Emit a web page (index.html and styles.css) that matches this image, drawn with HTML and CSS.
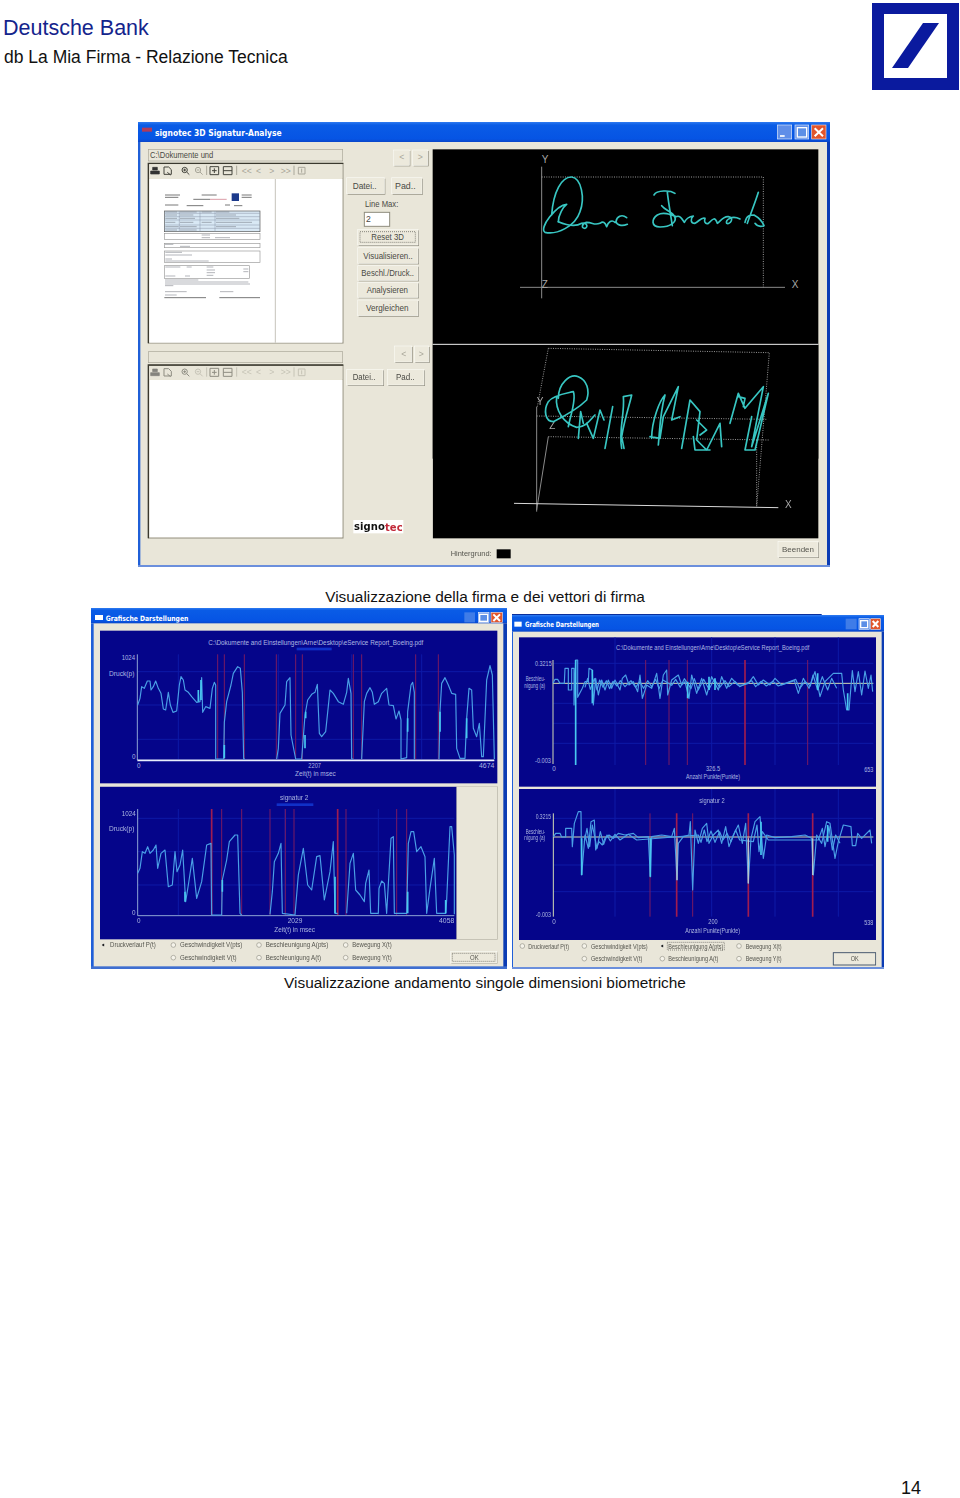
FILE: index.html
```html
<!DOCTYPE html>
<html lang="it">
<head>
<meta charset="utf-8">
<title>Deutsche Bank - db La Mia Firma</title>
<link rel="stylesheet" href="styles.css">
</head>
<body>
<main class="page">
<header class="header">
  <div class="heading">
    <div class="brand">Deutsche Bank</div>
    <div class="subtitle">db La Mia Firma - Relazione Tecnica</div>
  </div>
  <svg class="logo" viewBox="0 0 87 87" aria-label="Deutsche Bank logo">
    <path class="logo-mark" fill-rule="evenodd" d="M0 0H87V87H0ZM12 11V75H75V11Z"/>
    <path class="logo-mark" d="M51 20H67L36 65H20Z"/>
  </svg>
</header>

<svg class="shot shot-main" viewBox="24 21 2076 1335">
  <defs>
    <linearGradient id="tbar" x1="0" y1="0" x2="0" y2="1">
      <stop offset="0" stop-color="#2f7bf0"/><stop offset=".15" stop-color="#0a5ce6"/><stop offset=".85" stop-color="#0654e4"/><stop offset="1" stop-color="#0a46c8"/>
    </linearGradient>
    <g id="toolbar">
      <path class="ic-d" d="M62 168h26v9H62zM68 157h14v8H68z"/>
      <path class="ic-o" d="M102 156h14l8 8v14h-22zM112 172l10 8"/>
      <circle class="ic-o" cx="164" cy="165" r="8"/><path class="ic-o" d="M170 171l8 8M160 165h8M164 161v8"/>
      <circle class="ic-f" cx="204" cy="165" r="8"/><path class="ic-f" d="M210 171l8 8M200 165h8"/>
      <path class="ic-f" d="M230 152v28M320 152v28M492 152v28"/>
      <path class="ic-o" d="M240 155h26v24h-26zM246 167h14M253 160v14"/>
      <path class="ic-o" d="M280 155h26v24h-26zM280 167h26"/>
      <text class="t tool-t" x="335" y="167">&lt;&lt;</text>
      <text class="t tool-t" x="378" y="167">&lt;</text>
      <text class="t tool-t" x="418" y="167">&gt;</text>
      <text class="t tool-t" x="452" y="167">&gt;&gt;</text>
      <path class="ic-f" d="M505 157h20v20h-20zM515 161v12"/>
    </g>
  </defs>
  <rect class="win" x="24" y="21" width="2076" height="1335"/>
  <rect x="24" y="21" width="2076" height="60" fill="url(#tbar)"/>
  <rect class="bd-l" x="24" y="81" width="7" height="1275"/>
  <rect class="bd-r" x="2091" y="81" width="9" height="1275"/>
  <rect class="bd-b-soft" x="24" y="1350" width="2076" height="6"/>

  <g>
    <rect class="ico-red" x="36" y="38" width="30" height="12"/>
    <text class="t tt" x="75" y="53" textLength="380" lengthAdjust="spacingAndGlyphs">signotec 3D Signatur-Analyse</text>
    <rect class="field" x="55" y="103" width="583" height="35"/>
    <text class="t ui" x="60" y="121" textLength="190" lengthAdjust="spacingAndGlyphs">C:\Dokumente und</text>
    <rect class="frame" x="56" y="146" width="583" height="538"/>
    <path class="frame-top" d="M55 685V145H640"/>
    <rect class="tool" x="58" y="148" width="579" height="42"/>
    <use href="#toolbar"/>
    <rect class="sheet" x="58" y="192" width="579" height="491"/>
    <path class="rule" d="M436 192V683"/>

    <path class="doc-l" d="M105 240h45M105 247h40M215 240h45M190 253h50M105 270h40M170 272h50M285 270h15M312 272h25"/>
    <rect class="doc-logo" x="305" y="235" width="22" height="23"/>
    <path class="doc-l" d="M335 240h30M335 247h30"/>
    <path class="doc-red" d="M240 253h50"/>
    <rect class="doc-tb" x="103" y="288" width="287" height="62"/>
    <path class="doc-g" d="M103 295h287M103 305h287M103 315h287M103 330h287M103 340h287M148 288v62M210 288v62M255 288v62"/>
    <path class="doc-h" d="M106 291h35M150 291h50M215 291h30M258 291h40M106 300h35M150 300h40M258 300h60M106 310h35M150 310h45M258 310h70M106 322h30M150 322h40M215 322h30M258 322h108M106 335h40M150 335h50M258 335h60M106 345h35M150 345h50"/>
    <rect class="doc-box" x="103" y="355" width="287" height="18"/>
    <path class="doc-h" d="M215 360h25M215 368h25M255 368h45"/>
    <rect class="doc-box" x="103" y="385" width="287" height="13"/>
    <path class="doc-h" d="M105 388h25M150 394h30"/>
    <rect class="doc-box" x="103" y="408" width="287" height="34"/>
    <path class="doc-h" d="M106 412h50M106 420h80M106 432h20M106 438h130"/>
    <rect class="doc-box" x="103" y="452" width="255" height="38"/>
    <path class="doc-h" d="M106 456h45M170 456h15M230 456h20M230 465h25M230 473h25M230 481h20M340 462h15M340 470h15M106 483h30M165 483h15"/>
    <path class="doc-h" d="M105 495h100M105 501h250M105 507h255M105 512h25M105 530h65M270 530h40M105 540h35"/>
    <path class="doc-l" d="M103 548h125M268 548h122"/>

    <rect class="bs" x="793" y="108" width="48" height="46"/><rect class="bf" x="790" y="105" width="48" height="46"/>
    <rect class="bs" x="851" y="108" width="45" height="46"/><rect class="bf" x="848" y="105" width="45" height="46"/>
    <text class="t tool-t" x="808" y="127">&lt;</text><text class="t tool-t" x="863" y="127">&gt;</text>

    <rect class="bs" x="653" y="191" width="113" height="48"/><rect class="bf" x="650" y="188" width="113" height="48"/>
    <text class="t ui" x="668" y="213" textLength="72" lengthAdjust="spacingAndGlyphs">Datei..</text>
    <rect class="bs" x="788" y="191" width="91" height="48"/><rect class="bf" x="785" y="188" width="91" height="48"/>
    <text class="t ui" x="795" y="213" textLength="62" lengthAdjust="spacingAndGlyphs">Pad..</text>
    <text class="t ui" x="705" y="268" textLength="100" lengthAdjust="spacingAndGlyphs">Line Max:</text>
    <rect class="input" x="703" y="292" width="76" height="42"/>
    <text class="t ui" x="708" y="312">2</text>

    <rect class="bs" x="686" y="346" width="181" height="47"/><rect class="bf" x="683" y="343" width="181" height="47"/>
    <rect class="focus" x="690" y="350" width="166" height="32"/>
    <text class="t ui" x="724" y="366" textLength="98" lengthAdjust="spacingAndGlyphs">Reset 3D</text>
    <rect class="bs" x="686" y="401" width="181" height="47"/><rect class="bf" x="683" y="398" width="181" height="47"/>
    <text class="t ui" x="700" y="423" textLength="148" lengthAdjust="spacingAndGlyphs">Visualisieren..</text>
    <rect class="bs" x="686" y="455" width="181" height="44"/><rect class="bf" x="683" y="452" width="181" height="44"/>
    <text class="t ui" x="694" y="475" textLength="158" lengthAdjust="spacingAndGlyphs">Beschl./Druck..</text>
    <rect class="bs" x="686" y="505" width="181" height="45"/><rect class="bf" x="683" y="502" width="181" height="45"/>
    <text class="t ui" x="710" y="526" textLength="124" lengthAdjust="spacingAndGlyphs">Analysieren</text>
    <rect class="bs" x="686" y="558" width="181" height="47"/><rect class="bf" x="683" y="555" width="181" height="47"/>
    <text class="t ui" x="708" y="579" textLength="128" lengthAdjust="spacingAndGlyphs">Vergleichen</text>
  </g>

  <g transform="translate(0 675)">
    <rect class="field" x="55" y="35" width="583" height="33"/>
    <rect class="frame" x="56" y="76" width="583" height="518"/>
    <path class="frame-top" d="M55 595V75H640"/>
    <rect class="tool" x="58" y="78" width="579" height="40"/>
    <g class="faded"><use href="#toolbar" y="-70"/></g>
    <rect class="sheet" x="58" y="120" width="579" height="472"/>
    <rect class="bs" x="796" y="21" width="52" height="48"/><rect class="bf" x="793" y="18" width="52" height="48"/>
    <rect class="bs" x="856" y="21" width="43" height="48"/><rect class="bf" x="853" y="18" width="43" height="48"/>
    <text class="t tool-t" x="814" y="41">&lt;</text><text class="t tool-t" x="866" y="41">&gt;</text>
    <rect class="bs" x="653" y="91" width="109" height="47"/><rect class="bf" x="650" y="88" width="109" height="47"/>
    <text class="t ui" x="668" y="112" textLength="68" lengthAdjust="spacingAndGlyphs">Datei..</text>
    <rect class="bs" x="775" y="91" width="110" height="47"/><rect class="bf" x="772" y="88" width="110" height="47"/>
    <text class="t ui" x="798" y="112" textLength="56" lengthAdjust="spacingAndGlyphs">Pad..</text>
    <rect class="sheet" x="670" y="540" width="150" height="40"/>
    <text class="t sig-logo" x="672" y="560" textLength="146">signo<tspan class="sig-red">tec</tspan></text>
  </g>

  <g transform="translate(900 0)">
    <rect class="btn-min" x="1042" y="30" width="43" height="42"/>
    <path class="glyph" d="M1050 63h14"/>
    <rect class="btn-min" x="1095" y="30" width="41" height="42"/>
    <rect class="glyph-box" x="1102" y="38" width="28" height="28"/>
    <rect class="btn-close" x="1145" y="30" width="43" height="42"/>
    <path class="glyph-x" d="M1154 40l25 24M1179 40l-25 24"/>
    <rect class="black" x="8" y="103" width="1157" height="928"/>
    <path class="white-line" d="M8 688H1165"/>
    <path class="ax1" d="M335 155V550M270 517H1065"/>
    <path class="dots" d="M335 186H1000V517"/>
    <text class="t ax-t" x="335" y="132">Y</text><text class="t ax-t" x="1085" y="508">X</text><text class="t ax-t" x="335" y="508">Z</text>
    <g class="sig">
      <path d="M365 300C370 230 395 185 425 186C455 190 465 250 450 290C435 335 380 360 345 352C325 340 380 270 410 268C400 275 385 300 385 320"/>
      <path d="M385 320C420 335 440 334 455 325C470 322 476 335 465 340C452 340 456 325 470 322C490 322 490 332 510 325C520 318 525 322 530 335C535 320 545 313 555 322M590 308C575 296 560 305 558 320C560 330 575 335 592 328"/>
      <path d="M672 240C680 225 720 225 735 235M712 232C715 260 722 300 727 332"/>
      <path d="M695 272C705 285 725 290 732 302C745 320 720 336 690 336C662 335 665 312 682 300C700 290 720 298 738 305C750 300 755 310 763 322C768 312 775 305 790 303C780 312 782 325 795 325C808 318 815 305 825 310C822 320 825 328 835 325C850 310 855 305 862 325C870 320 880 303 895 305C915 308 900 330 890 325C885 315 905 300 930 312"/>
      <path d="M985 232C975 265 960 300 952 325M945 322C950 300 960 300 972 300C990 310 998 322 1002 332C990 336 980 332 975 325"/>
    </g>
  </g>

  <g transform="translate(900 675)">
    <rect class="black" x="8" y="15" width="1157" height="580"/>
    <path class="dots" d="M355 25L1018 38L980 500M355 25L322 200M320 228L1010 238M355 290L1018 300M980 300V500"/>
    <path class="ax1" d="M355 290L320 510M320 200V515"/>
    <path class="ax2" d="M252 490L1045 503"/>
    <text class="t ax-t" x="320" y="183">Y</text><text class="t ax-t" x="358" y="255">Z</text><text class="t ax-t" x="1065" y="493">X</text>
    <g class="sig">
      <path d="M385 175C385 130 420 100 445 110C470 120 480 150 470 180C440 210 400 230 370 245C345 245 340 210 355 185C370 165 410 160 430 155C440 180 420 230 415 260M380 170C375 210 400 250 440 262C470 260 480 240 495 225"/>
      <path d="M445 295L452 215L460 250M470 250L490 295L510 210L522 240M525 325L548 200M575 325C565 270 585 220 580 170L605 165C600 190 585 230 575 290L582 325"/>
      <path d="M665 295C665 240 690 180 705 165C690 220 690 260 685 315M660 290L690 295L700 230L745 140L725 240L750 230M755 325L780 180L810 215L800 300L830 330L870 250L875 320M790 290L795 330L840 330M800 240L830 270L810 285"/>
      <path d="M900 250L925 160L945 205L1000 140L965 320L1015 160L975 330L945 330L965 230M925 170L945 175L940 200"/>
    </g>
    <text class="t ui-s" x="62" y="640" textLength="123" lengthAdjust="spacingAndGlyphs">Hintergrund:</text>
    <rect class="black" x="200" y="628" width="42" height="27"/>
    <rect class="bs" x="1047" y="607" width="120" height="47"/><rect class="bf" x="1044" y="604" width="120" height="47"/>
    <text class="t ui-s" x="1056" y="628" textLength="96" lengthAdjust="spacingAndGlyphs">Beenden</text>
  </g>
</svg>

<p class="caption">Visualizzazione della firma e dei vettori di firma</p>

<div class="shot-row">
  <svg class="shot shot-left" viewBox="18 9 1248 1083">
    <rect class="win" x="18" y="9" width="1248" height="1083"/>
    <rect x="18" y="9" width="1248" height="46" fill="url(#tbar)"/>
    <rect class="bd-l" x="18" y="55" width="8" height="1037"/>
    <rect class="bd-r" x="1255" y="55" width="11" height="1037"/>
    <rect class="bd-b" x="18" y="1084" width="1248" height="8"/>
    <rect class="sheet" x="30" y="30" width="24" height="15"/>
    <text class="t tt-s" x="62" y="40" textLength="248" lengthAdjust="spacingAndGlyphs">Grafische Darstellungen</text>
    <rect class="btn-dim" x="1138" y="22" width="32" height="30"/>
    <rect class="btn-min" x="1180" y="22" width="32" height="30"/>
    <rect class="glyph-box" x="1184" y="28" width="24" height="21"/>
    <rect class="btn-close" x="1218" y="22" width="34" height="30"/>
    <path class="glyph-x" d="M1225 28l20 20M1245 28l-20 20"/>

    <rect class="plot" x="45" y="77" width="1192" height="458"/>
    <path class="grid" d="M157 200H1228M157 300H1228M157 403H1228M280 148V462M580 148V462M800 148V462M1010 148V462"/>
    <path class="red" d="M398 148V462M418 148V462M478 148V462M574 148V462M632 148V462M652 148V462M805 148V462M830 148V462M992 148V462M1060 148V462"/>
    <path class="ax-b" d="M157 148V465"/>
    <path class="ax-w" d="M157 466H1228"/>
    <polyline class="line" points="158,300 165,280 170,245 178,250 187,228 195,228 198,255 205,245 212,228 220,250 228,265 235,312 242,315 250,262 256,300 264,322 275,318 283,240 288,215 295,225 300,255 310,262 320,275 335,292 345,290 350,218 353,322 362,305 375,310 382,250 388,232 392,240 392,462 416,462 418,352 425,290 438,240 445,205 458,185 466,190 472,262 476,462 480,462"/>
    <polyline class="line" points="575,462 580,430 585,325 600,300 605,230 615,218 618,390 632,462 650,462 660,330 668,285 680,268 690,262 697,238 703,385 710,395 722,380 735,255 745,265 760,290 775,298 785,262 790,220 798,265 800,462 805,462"/>
    <polyline class="line" points="830,462 838,290 845,265 855,248 862,262 868,298 880,290 890,265 905,250 912,300 925,302 933,342 942,318 948,345 948,462 965,458 968,320 978,240 983,232 988,262 988,462"/>
    <polyline class="line" points="1062,462 1065,320 1070,235 1080,218 1090,240 1100,265 1112,268 1115,430 1125,460 1140,460 1145,340 1152,250 1160,255 1165,370 1175,395 1183,355 1190,455 1195,455 1205,225 1215,182 1222,210 1228,462"/>
    <path class="line-hi" d="M340 290V255M348 285V225M418 460V420M662 340V320M660 430V390M1065 380V320M1145 400V340M968 380V340"/>
    <text class="t pl" x="370" y="113" textLength="645" lengthAdjust="spacingAndGlyphs">C:\Dokumente and Einstellungen\Arne\Desktop\eService Report_Boeing.pdf</text>
    <rect class="blurb" x="635" y="128" width="105" height="8"/>
    <text class="t pl" x="110" y="158" textLength="40" lengthAdjust="spacingAndGlyphs">1024</text>
    <text class="t pl" x="72" y="204" textLength="76" lengthAdjust="spacingAndGlyphs">Druck(p)</text>
    <text class="t pl" x="141" y="455">0</text>
    <text class="t pl" x="156" y="481">0</text>
    <text class="t pl" x="670" y="481" textLength="38" lengthAdjust="spacingAndGlyphs">2207</text>
    <text class="t pl" x="1182" y="481" textLength="46" lengthAdjust="spacingAndGlyphs">4674</text>
    <text class="t pl" x="630" y="505" textLength="122" lengthAdjust="spacingAndGlyphs">Zeit(t) in msec</text>

    <g transform="translate(0 540)">
      <rect class="panel" x="1115" y="5" width="122" height="458"/>
      <rect class="plot" x="45" y="5" width="1069" height="458"/>
      <path class="grid" d="M158 100H1108M158 200H1108M158 300H1108M280 72V390M600 72V390M880 72V390"/>
      <path class="red" d="M410 72V390M470 72V390M555 72V390M601 72V390M627 72V390M783 72V390M935 72V390M965 72V390"/>
      <path class="red-b" d="M380 72V390M758 72V390"/>
      <path class="ax-b" d="M158 72V392H1108"/>
      <polyline class="line" points="158,265 165,250 172,200 180,205 188,185 195,205 205,195 213,180 218,250 228,205 240,195 250,305 262,300 270,200 276,260 285,240 293,195 302,350 310,300 322,220 335,340 350,290 365,180 378,175 380,390 410,390 412,285 425,225 433,170 450,150 458,150 465,385 470,390"/>
      <polyline class="line" points="555,388 562,320 568,230 580,205 588,175 592,385 630,390 640,270 655,190 668,300 680,315 695,215 705,212 718,345 735,260 745,170 750,385 758,385"/>
      <polyline class="line" points="785,385 795,235 805,205 812,315 825,330 838,350 842,295 852,255 857,385 880,385 882,310 890,288 898,295 905,385 918,160 925,155 928,385 965,385 970,175 978,140 986,140 995,200 1008,185 1020,215 1025,385 1035,310 1048,220 1055,385 1082,385 1085,345 1095,125 1100,125 1108,210 1108,388"/>
      <path class="line-hi" d="M750 385V275M968 385V320M1082 385V345M412 320V285M300 350V320"/>
      <text class="t pl" x="585" y="38" textLength="85" lengthAdjust="spacingAndGlyphs">signatur 2</text>
      <rect class="blurb" x="575" y="55" width="110" height="8"/>
      <text class="t pl" x="110" y="85" textLength="42" lengthAdjust="spacingAndGlyphs">1024</text>
      <text class="t pl" x="72" y="130" textLength="76" lengthAdjust="spacingAndGlyphs">Druck(p)</text>
      <text class="t pl" x="141" y="382">0</text>
      <text class="t pl" x="156" y="408">0</text>
      <text class="t pl" x="608" y="408" textLength="44" lengthAdjust="spacingAndGlyphs">2029</text>
      <text class="t pl" x="1062" y="408" textLength="46" lengthAdjust="spacingAndGlyphs">4058</text>
      <text class="t pl" x="568" y="433" textLength="122" lengthAdjust="spacingAndGlyphs">Zeit(t) in msec</text>

      <circle class="radio on" cx="55" cy="480" r="5"/>
      <text class="t ui-s" x="75" y="480" textLength="137" lengthAdjust="spacingAndGlyphs">Druckverlauf P(t)</text>
      <circle class="radio" cx="265" cy="480" r="7"/>
      <text class="t ui-s" x="285" y="480" textLength="187" lengthAdjust="spacingAndGlyphs">Geschwindigkeit V(pts)</text>
      <circle class="radio" cx="522" cy="480" r="7"/>
      <text class="t ui-s" x="542" y="480" textLength="188" lengthAdjust="spacingAndGlyphs">Beschleunigung A(pts)</text>
      <circle class="radio" cx="782" cy="480" r="7"/>
      <text class="t ui-s" x="802" y="480" textLength="118" lengthAdjust="spacingAndGlyphs">Bewegung X(t)</text>
      <circle class="radio" cx="265" cy="518" r="7"/>
      <text class="t ui-s" x="285" y="518" textLength="170" lengthAdjust="spacingAndGlyphs">Geschwindigkeit V(t)</text>
      <circle class="radio" cx="522" cy="518" r="7"/>
      <text class="t ui-s" x="542" y="518" textLength="166" lengthAdjust="spacingAndGlyphs">Beschleunigung A(t)</text>
      <circle class="radio" cx="782" cy="518" r="7"/>
      <text class="t ui-s" x="802" y="518" textLength="118" lengthAdjust="spacingAndGlyphs">Bewegung Y(t)</text>
      <rect class="bs" x="1099" y="502" width="138" height="34"/><rect class="bf" x="1097" y="500" width="138" height="34"/>
      <rect class="focus" x="1102" y="505" width="128" height="24"/>
      <text class="t ui-s" x="1155" y="517" textLength="26" lengthAdjust="spacingAndGlyphs">OK</text>
    </g>
  </svg>

  <svg class="shot shot-right" viewBox="21 12 1116 1065">
    <rect class="win" x="21" y="12" width="1116" height="1065"/>
    <rect x="21" y="15" width="1116" height="50" fill="url(#tbar)"/>
    <rect class="page-bg" x="950" y="12" width="187" height="3"/>
    <rect class="top-dark" x="21" y="12" width="929" height="3"/>
    <rect class="bd-l" x="21" y="65" width="3" height="1012"/>
    <rect class="bd-r" x="1130" y="65" width="7" height="1012"/>
    <rect class="bd-b-soft" x="21" y="1071" width="1116" height="6"/>
    <rect class="sheet" x="28" y="35" width="22" height="15"/>
    <text class="t tt-s" x="60" y="44" textLength="222" lengthAdjust="spacingAndGlyphs">Grafische Darstellungen</text>
    <rect class="btn-dim" x="1022" y="26" width="33" height="32"/>
    <rect class="btn-min" x="1062" y="26" width="31" height="32"/>
    <rect class="glyph-box" x="1067" y="32" width="21" height="21"/>
    <rect class="btn-close" x="1097" y="26" width="29" height="32"/>
    <path class="glyph-x" d="M1103 33l17 18M1120 33l-17 18"/>

    <rect class="plot" x="42" y="82" width="1071" height="448"/>
    <path class="grid" d="M144 160H1105M144 280H1105M144 340H1105M144 400H1105M330 82V465M620 82V465M810 82V465M1000 82V465"/>
    <path class="red" d="M422 150V465M492 150V465M547 150V465M908 150V465"/>
    <path class="red-b" d="M720 150V465"/>
    <path class="ax-y" d="M144 150V462M144 220H1105"/>
    <polyline class="line" points="144,220 150,208 158,208 165,220 178,220 180,175 190,175 190,240 200,240 200,175 207,175 207,285 212,150 218,150 218,262 232,235 240,215 250,215 252,175 262,180 265,285 272,205 280,255 290,210 300,240 310,210 320,235 330,210 345,240 352,205 362,195 372,225 385,215 398,245 405,195 412,265 425,225 440,235 455,190 465,265 475,195 485,180 488,255 500,210 520,195 530,225 540,215 552,265 560,195 575,250 590,205 605,255 620,200 640,240 650,200 665,235 680,205 698,225 715,225 730,220 745,200 760,225 775,210 795,225 810,205 830,225 850,218 868,212 880,250 895,205 912,235 930,185 945,260 960,215 985,190 1010,190 1015,240 1025,300 1032,300 1042,182 1050,245 1060,185 1070,255 1080,183 1090,235 1098,195 1103,245"/>
    <polyline class="line" points="240,232 248,205 256,238 268,206 276,240 284,210 294,232 304,212 314,236 324,214 336,228 346,212 360,230 378,212 392,232 404,215 416,235 428,212 440,230 452,208 462,236 474,210 500,226 512,208 526,232 538,206 558,236 568,206 580,240 596,208 612,238 628,208 644,232 660,212 672,230 690,214 704,230 740,212 752,230 768,214 784,228 804,214 820,228 872,208 884,236 900,214 916,228 924,195 938,240 952,200 968,240 980,205 995,235"/>
    <path class="line-hi" d="M212 150V465M262 180V280M548 215V265M612 200V240M630 205V240M938 190V240M1028 250V300"/>
    <text class="t pl" x="333" y="113" textLength="580" lengthAdjust="spacingAndGlyphs">C:\Dokumente and Einstellungen\Arne\Desktop\eService Report_Boeing.pdf</text>
    <text class="t pl" x="90" y="160" textLength="50" lengthAdjust="spacingAndGlyphs">0.3215</text>
    <text class="t pl" x="62" y="205" textLength="58" lengthAdjust="spacingAndGlyphs">Beschleu-</text>
    <text class="t pl" x="58" y="225" textLength="62" lengthAdjust="spacingAndGlyphs">nigung (a)</text>
    <text class="t pl" x="90" y="452" textLength="48" lengthAdjust="spacingAndGlyphs">-0.003</text>
    <text class="t pl" x="142" y="476">0</text>
    <text class="t pl" x="603" y="476" textLength="42" lengthAdjust="spacingAndGlyphs">326.5</text>
    <text class="t pl" x="1078" y="478" textLength="27" lengthAdjust="spacingAndGlyphs">653</text>
    <text class="t pl" x="543" y="500" textLength="162" lengthAdjust="spacingAndGlyphs">Anzahl Punkte(Punkte)</text>

    <g transform="translate(0 525)">
      <rect class="plot" x="42" y="12" width="1071" height="453"/>
      <path class="grid" d="M145 100H1105M145 240H1105M145 320H1105M330 12V395M620 12V395M810 12V395M1000 12V395"/>
      <path class="red" d="M435 85V395M563 85V395"/>
      <path class="red-b" d="M515 85V395M730 85V395M923 85V395"/>
      <path class="ax-y" d="M145 85V395M145 156H1105"/>
      <polyline class="line" points="145,156 152,145 165,145 170,156 182,156 182,130 200,130 202,185 208,115 220,80 228,80 230,270 240,150 250,190 258,110 268,105 272,195 282,170 292,180 300,160 312,150 325,160 340,145 360,150 385,145 400,158 430,155 436,275 440,155 470,150 500,155 508,130 516,285 520,175 535,155 552,150 556,110 563,315 570,135 580,175 592,130 605,115 612,175 625,150 640,135 650,175 662,125 672,185 685,150 700,120 712,175 722,115 730,295 738,160 750,110 765,95 775,220 785,150 810,158 860,155 900,150 920,160 925,270 935,150 950,175 965,110 975,115 990,220 1000,170 1015,120 1038,125 1042,182 1052,182 1058,145 1070,160 1095,135 1100,175"/>
      <polyline class="line" points="238,170 246,130 254,185 262,120 276,190 286,140 296,178 306,150 316,168 330,148 345,165 370,148 395,165 580,150 588,172 598,135 606,170 618,138 630,172 644,140 654,165 666,145 678,170 692,135 704,165 745,170 756,120 762,200 772,140 790,165 940,165 952,130 960,185 972,125 982,195 992,150 1005,175"/>
      <path class="ax-g" d="M516 160V285M730 160V295M923 160V270"/>
      <path class="line-hi" d="M436 160V275M230 160V270M768 110V210M968 120V170"/>
      <text class="t pl" x="583" y="47" textLength="76" lengthAdjust="spacingAndGlyphs">signatur 2</text>
      <text class="t pl" x="92" y="93" textLength="46" lengthAdjust="spacingAndGlyphs">0.3215</text>
      <text class="t pl" x="62" y="138" textLength="58" lengthAdjust="spacingAndGlyphs">Beschleu-</text>
      <text class="t pl" x="58" y="158" textLength="62" lengthAdjust="spacingAndGlyphs">nigung (a)</text>
      <text class="t pl" x="92" y="388" textLength="46" lengthAdjust="spacingAndGlyphs">-0.003</text>
      <text class="t pl" x="142" y="410">0</text>
      <text class="t pl" x="610" y="410" textLength="28" lengthAdjust="spacingAndGlyphs">200</text>
      <text class="t pl" x="1078" y="412" textLength="27" lengthAdjust="spacingAndGlyphs">538</text>
      <text class="t pl" x="541" y="436" textLength="164" lengthAdjust="spacingAndGlyphs">Anzahl Punkte(Punkte)</text>

      <circle class="radio" cx="52" cy="483" r="7"/>
      <text class="t ui-s" x="70" y="483" textLength="122" lengthAdjust="spacingAndGlyphs">Druckverlauf P(t)</text>
      <circle class="radio" cx="238" cy="483" r="7"/>
      <text class="t ui-s" x="258" y="483" textLength="170" lengthAdjust="spacingAndGlyphs">Geschwindigkeit V(pts)</text>
      <circle class="radio on" cx="472" cy="483" r="5"/>
      <rect class="focus" x="487" y="472" width="171" height="23"/>
      <text class="t ui-s" x="490" y="483" textLength="165" lengthAdjust="spacingAndGlyphs">Beschleunigung A(pts)</text>
      <circle class="radio" cx="702" cy="483" r="7"/>
      <text class="t ui-s" x="722" y="483" textLength="108" lengthAdjust="spacingAndGlyphs">Bewegung X(t)</text>
      <circle class="radio" cx="238" cy="521" r="7"/>
      <text class="t ui-s" x="258" y="521" textLength="154" lengthAdjust="spacingAndGlyphs">Geschwindigkeit V(t)</text>
      <circle class="radio" cx="472" cy="521" r="7"/>
      <text class="t ui-s" x="490" y="521" textLength="150" lengthAdjust="spacingAndGlyphs">Beschleunigung A(t)</text>
      <circle class="radio" cx="702" cy="521" r="7"/>
      <text class="t ui-s" x="722" y="521" textLength="108" lengthAdjust="spacingAndGlyphs">Bewegung Y(t)</text>
      <rect class="ok" x="985" y="503" width="127" height="37"/>
      <text class="t ui-s" x="1037" y="521" textLength="24" lengthAdjust="spacingAndGlyphs">OK</text>
    </g>
  </svg>
</div>

<p class="caption caption-second">Visualizzazione andamento singole dimensioni biometriche</p>

<footer class="footer">14</footer>
</main>
</body>
</html>
```

FILE: styles.css
```css
* { box-sizing: border-box; }
html, body { margin: 0; padding: 0; background: #fff; }
.page {
  width: 960px;
  height: 1498px;
  display: flex;
  flex-direction: column;
  font-family: "Liberation Sans", Arial, sans-serif;
  color: #111;
  overflow: hidden;
}
.header {
  display: flex;
  justify-content: space-between;
  padding: 3px 1px 0 3px;
}
.heading { padding-top: 11px; }
.brand { font-size: 21.5px; line-height: 28px; color: #14248c; }
.subtitle { font-size: 17.5px; line-height: 30px; color: #111; padding-left: 1px; }
.logo { width: 87px; height: 87px; display: block; }
.logo-mark { fill: #0a1a9e; }

.shot { display: block; filter: blur(0.4px); }
.shot-main { width: 692px; height: 445px; margin: 32px 0 0 138px; }
.shot-row { display: flex; align-items: flex-end; gap: 5px; margin: 2px 0 0 91px; }
.shot-left { width: 416px; height: 361px; }
.shot-right { width: 372px; height: 355px; }
.caption { margin: 21px 0 0; width: 970px; text-align: center; font-size: 15.4px; line-height: 18px; color: #111; }
.caption-second { margin-top: 5px; }
.footer { margin-top: auto; padding: 0 39px 0 0; text-align: right; font-size: 18px; line-height: 20px; color: #111; }

/* window chrome */
.win, .panel { fill: #e9e6d9; }
.panel { stroke: #b5b2a4; stroke-width: 2; }
.bd-l { fill: #1f5fd8; }
.bd-r { fill: #0b3cb4; }
.bd-b { fill: #3f6fd0; }
.bd-b-soft { fill: #6b8fdc; }
.top-dark { fill: #0a2f9c; }
.page-bg { fill: #fff; }
.btn-min { fill: #5f8ee8; stroke: #dfe9fb; stroke-width: 2; }
.btn-dim { fill: #3f7ce8; }
.btn-close { fill: #e2562c; stroke: #f3d9cf; stroke-width: 2; }
.glyph { stroke: #fff; stroke-width: 5; fill: none; }
.glyph-box { fill: #5c8fe6; stroke: #fff; stroke-width: 4; }
.glyph-x { stroke: #fff; stroke-width: 6; fill: none; }
.ico-red { fill: #b03a5a; }

/* text in the pictures */
.t { font-family: "Liberation Sans", Arial, sans-serif; dominant-baseline: central; }
.tt { font-family: "DejaVu Sans", sans-serif; font-weight: 700; font-size: 26px; fill: #fff; }
.tt-s { font-family: "DejaVu Sans", sans-serif; font-weight: 700; font-size: 22px; fill: #fff; }
.ui { font-size: 26px; fill: #4a4a44; }
.ui-s { font-size: 22px; fill: #55554e; }
.tool-t { font-size: 26px; fill: #a9a79a; }
.ax-t { font-size: 30px; fill: #a8a8a8; }
.pl { font-size: 19px; fill: #aeb8e2; }
.sig-logo { font-family: "DejaVu Sans", sans-serif; font-weight: 700; font-size: 30px; fill: #111; }
.sig-red { fill: #c22a3a; }

/* controls */
.field { fill: #e9e6d9; stroke: #a9a698; stroke-width: 2; }
.frame { fill: #e9e6d9; stroke: #8f8c7e; stroke-width: 3; }
.frame-top { fill: none; stroke: #3a382e; stroke-width: 4; }
.tool { fill: #e9e6d9; }
.sheet { fill: #fff; }
.rule { stroke: #a9a698; stroke-width: 2; fill: none; }
.bs { fill: #8f8c7e; }
.bf { fill: #ece9dc; stroke: #fafaf4; stroke-width: 2; }
.input { fill: #fff; stroke: #8f8c7e; stroke-width: 3; }
.focus { fill: none; stroke: #55554e; stroke-width: 2; stroke-dasharray: 3 3; }
.ok { fill: #ece9dc; stroke: #4a5a70; stroke-width: 3; }
.radio { fill: #f5f3ea; stroke: #96948a; stroke-width: 2; }
.radio.on { fill: #222; stroke: #f5f3ea; stroke-width: 3; }
.faded { opacity: 0.55; }

/* toolbar icons */
.ic-d { fill: #333; stroke: #333; stroke-width: 2; }
.ic-o { fill: none; stroke: #44443c; stroke-width: 3; }
.ic-f { fill: none; stroke: #a9a79a; stroke-width: 3; }

/* document thumbnail */
.doc-l { stroke: #333; stroke-width: 2; fill: none; }
.doc-g { stroke: #8a94a8; stroke-width: 1.5; fill: none; }
.doc-h { stroke: #666a74; stroke-width: 1.5; fill: none; }
.doc-red { stroke: #c86a7a; stroke-width: 2; fill: none; }
.doc-logo { fill: #1c3a8c; }
.doc-tb { fill: #d8e8f4; stroke: #555; stroke-width: 2; }
.doc-box { fill: #fff; stroke: #999; stroke-width: 2; }

/* 3D view */
.black { fill: #000; }
.white-line { stroke: #f0f0f0; stroke-width: 3; fill: none; }
.ax1 { stroke: #8a8a8a; stroke-width: 3; fill: none; }
.ax2 { stroke: #d8d8d8; stroke-width: 3; fill: none; }
.dots { stroke: #999; stroke-width: 3; stroke-dasharray: 3 4; fill: none; }
.sig path { stroke: #38c6c2; stroke-width: 5; fill: none; stroke-linejoin: round; stroke-linecap: round; }

/* charts */
.plot { fill: #05058a; }
.grid { stroke: #0e1aa6; stroke-width: 3; fill: none; }
.red { stroke: #7a1a62; stroke-width: 3; fill: none; }
.red-b { stroke: #a01c50; stroke-width: 5; fill: none; }
.ax-b { stroke: #8ea4d4; stroke-width: 3; fill: none; }
.ax-w { stroke: #e8eefc; stroke-width: 5; fill: none; }
.ax-y { stroke: #d4dcb4; stroke-width: 3; fill: none; }
.ax-g { stroke: #b8c4cc; stroke-width: 4; fill: none; }
.line { stroke: #4a9fe6; stroke-width: 3.5; fill: none; stroke-linejoin: round; }
.line-hi { stroke: #48c8f0; stroke-width: 5; fill: none; }
.blurb { fill: #1030c8; }
```
